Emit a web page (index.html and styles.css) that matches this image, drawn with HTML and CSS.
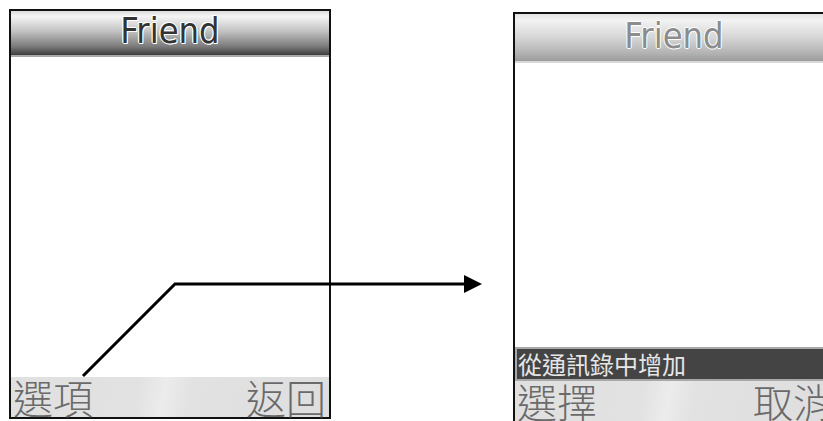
FILE: index.html
```html
<!DOCTYPE html>
<html lang="zh-Hant">
  <head>
    <meta charset="UTF-8" />
    <title>Friend - 從通訊錄中增加</title>
    <link rel="stylesheet" href="styles.css">
  </head>
  <body>
    <div class="phone phone-left">
      <div class="title-bar dark">Friend</div>
      <div class="screen-body"></div>
      <div class="soft-keys">
        <span>選項</span>
        <span>返回</span>
      </div>
    </div>

    <div class="phone phone-right">
      <div class="title-bar faded">Friend</div>
      <div class="screen-body"></div>
      <div class="menu-item">從通訊錄中增加</div>
      <div class="soft-keys">
        <span>選擇</span>
        <span>取消</span>
      </div>
    </div>

    <!-- arrow from the left soft key to the second screen -->
    <svg class="flow-arrow" width="823" height="421" viewBox="0 0 823 421">
      <polyline points="83,376 175,284 466,284" fill="none" stroke="#000" stroke-width="3" />
      <polygon points="464,275 482,284 464,293" fill="#000" />
    </svg>
  </body>
</html>
```

FILE: styles.css
```css
html,
body {
  margin: 0;
  padding: 0;
  height: 100%;
  background: #fff;
  overflow: hidden;
}
body {
  display: flex;
  align-items: flex-start;
  position: relative;
}
.phone {
  display: flex;
  flex-direction: column;
  border: 2px solid #111;
  background: #fff;
  flex-shrink: 0;
}
.phone-left {
  width: 318px;
  margin: 9px 0 0 9px;
}
.phone-right {
  width: 318px;
  margin: 12px 0 0 182px;
}
.title-bar {
  font-family: "DejaVu Sans Condensed", "DejaVu Sans", sans-serif;
  font-size: 36px;
  text-align: center;
  border-bottom: 2px solid #aaa;
}
.title-bar.dark {
  height: 44px;
  line-height: 40px;
  color: #333;
  background: linear-gradient(180deg, #dcdcdc 0%, #f4f4f4 12%, #c4c4c4 45%, #7c7c7c 80%, #3e3e3e 100%);
  text-shadow: 1px 0 #fff, -1px 0 #fff, 0 1px #fff, 0 -1px #fff, 1px 1px #fff, -1px -1px #fff;
}
.title-bar.faded {
  height: 47px;
  line-height: 44px;
  color: #8c8c8c;
  border-bottom-color: #d8d8d8;
  background: linear-gradient(180deg, #e4e4e4 0%, #f2f2f2 14%, #d6d6d6 50%, #b4b4b4 82%, #9c9c9c 100%);
  text-shadow: 1px 0 #fff, -1px 0 #fff, 0 1px #fff, 0 -1px #fff;
}
.phone-left .screen-body {
  height: 320px;
}
.phone-right .screen-body {
  height: 284px;
}
.menu-item {
  height: 30px;
  line-height: 30px;
  border: 2px solid #a8a8a8;
  background: #444;
  color: #e6e6e6;
  font-family: "Noto Sans CJK TC", sans-serif;
  font-size: 24px;
  padding-left: 1px;
  white-space: nowrap;
  overflow: hidden;
}
.soft-keys {
  height: 40px;
  display: flex;
  justify-content: space-between;
  padding: 0 3px 0 2px;
  background: linear-gradient(100deg, #e0e0e0 0%, #e2e2e2 40%, #ececec 48%, #e2e2e2 56%, #dedede 100%);
  color: #6a6a6a;
  font-family: "Noto Sans CJK TC", sans-serif;
  font-size: 40px;
  font-weight: 300;
  line-height: 40px;
  white-space: nowrap;
}
.phone-right .soft-keys {
  padding-right: 0;
}
.flow-arrow {
  position: absolute;
  left: 0;
  top: 0;
  pointer-events: none;
}
```
